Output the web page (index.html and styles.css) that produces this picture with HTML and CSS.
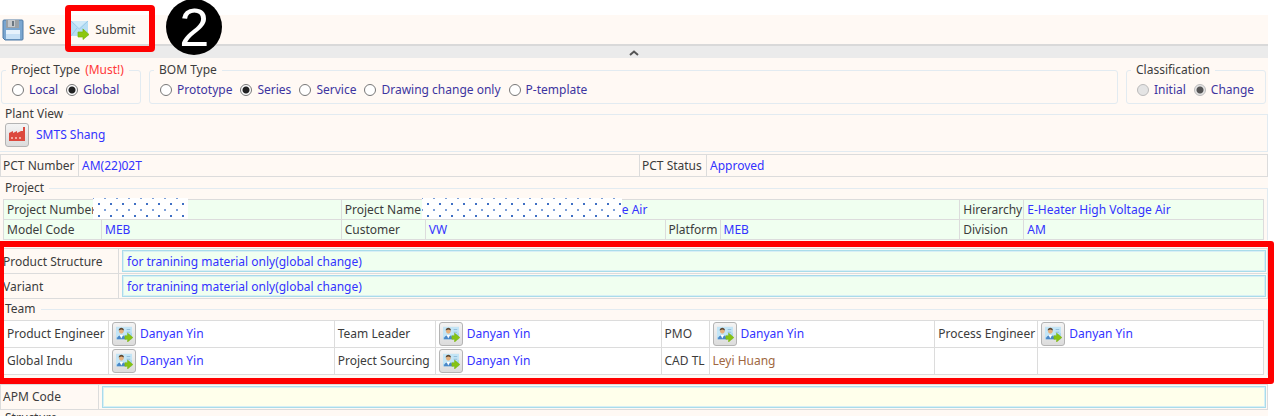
FILE: index.html
```html
<!DOCTYPE html>
<html lang="en">
<head>
<meta charset="utf-8">
<title>PCT Form</title>
<link rel="stylesheet" href="styles.css">
</head>
<body>
<svg class="defs" aria-hidden="true">
  <symbol id="person" viewBox="0 0 20 18">
    <rect x="1" y="1" width="18" height="14" fill="#a9d5ee"/>
    <path d="M1 1h18v7L1 13z" fill="#c3e5f6"/>
    <path d="M2 15c0-6 10-6 10 0z" fill="#4a88c8"/>
    <path d="M5 10l2 4 2-4z" fill="#fff"/>
    <circle cx="7" cy="6" r="2.6" fill="#e6b07c"/>
    <path d="M4 5c0-4 6-4 6 0l-3-1z" fill="#5d4630"/>
    <path d="M13 4h4M13 7h4" stroke="#8ab8d8"/>
    <path d="M11 11h3V8l6 5-6 5v-3h-3z" fill="#86c313" stroke="#79b512" stroke-width=".6"/>
  </symbol>
</svg>
<main class="app">
  <div class="toolbar">
    <button class="tool" type="button">
      <svg width="22" height="22" viewBox="0 0 22 22" aria-hidden="true">
        <path d="M1 2q0-1 1-1h18q1 0 1 1v18q0 1-1 1H3l-2-2z" fill="#7aa6d0" stroke="#4f7ba6"/>
        <path d="M4 1h13v8H4z" fill="#9ba1a6"/><path d="M6 1h7v7H6z" fill="#c6c9cc"/><path d="M10 2h2v5h-2z" fill="#6a7680"/>
        <path d="M4 11h14v9H4z" fill="#e6f2fc"/><path d="M4 15h14v5H4z" fill="#c7e0f5"/>
      </svg>
      <span>Save</span>
    </button>
    <button class="tool submit" type="button">
      <svg width="20" height="20" viewBox="0 0 20 20" aria-hidden="true">
        <path d="M1 1h17v15H1z" fill="#b7def5"/><path d="M1 1l8.500 8L18 1M1 16l6-8M18 16l-6-8" fill="none" stroke="#9ccae8"/>
        <path d="M2 1h15l-8 7z" fill="#d0eaf9"/>
        <path d="M8 12h5V9l6 5.500-6 5V17H8z" fill="#8cc70f" stroke="#7ab510" stroke-width=".7"/>
      </svg>
      <span>Submit</span>
    </button>
    <span class="step">2</span>
  </div>
  <button class="collapse" type="button" aria-label="Collapse toolbar">
    <svg width="10" height="6" viewBox="0 0 10 6" aria-hidden="true"><path d="M1 5l4-3.500L9 5" fill="none" stroke="#555" stroke-width="2"/></svg>
  </button>

  <div class="types">
    <fieldset class="group side">
      <legend>Project Type <span class="must">(Must!)</span></legend>
      <div class="radios">
        <label><input type="radio" name="ptype">Local</label>
        <label><input type="radio" name="ptype" checked>Global</label>
      </div>
    </fieldset>
    <fieldset class="group wide">
      <legend>BOM Type</legend>
      <div class="radios">
        <label><input type="radio" name="bom">Prototype</label>
        <label><input type="radio" name="bom" checked>Series</label>
        <label><input type="radio" name="bom">Service</label>
        <label><input type="radio" name="bom">Drawing change only</label>
        <label><input type="radio" name="bom">P-template</label>
      </div>
    </fieldset>
    <fieldset class="group side">
      <legend>Classification</legend>
      <div class="radios">
        <label><input type="radio" name="cls" disabled>Initial</label>
        <label><input type="radio" name="cls" checked disabled>Change</label>
      </div>
    </fieldset>
  </div>

  <fieldset class="section plant">
    <legend>Plant View</legend>
    <div class="pick">
      <button class="pick-btn" type="button" aria-label="Choose plant">
        <svg width="18" height="18" viewBox="0 0 18 18" aria-hidden="true">
          <path d="M1 15V7l4-2v2l4-2v2l4-2h2V1h2v14z" fill="#dc4a3f"/>
          <path d="M3 11h2v2H3zM7 11h2v2H7zM11 11h2v2h-2z" fill="#f3a9a0"/>
        </svg>
      </button>
      <span class="value">SMTS Shang</span>
    </div>
  </fieldset>

  <table class="grid pct">
    <colgroup><col class="w78"><col><col class="w67"><col></colgroup>
    <tr><th>PCT Number</th><td>AM(22)02T</td><th>PCT Status</th><td>Approved</td></tr>
  </table>

  <fieldset class="section project">
    <legend>Project</legend>
    <table class="grid green">
      <colgroup><col class="w98"><col><col class="w84"><col><col class="w55"><col><col class="w64"><col></colgroup>
      <tr><th>Project Number</th><td><span class="mask short"></span></td><th>Project Name</th><td colspan="3"><span class="mask long"></span><span class="tail">e Air</span></td><th>Hirerarchy</th><td>E-Heater High Voltage Air</td></tr>
      <tr><th>Model Code</th><td>MEB</td><th>Customer</th><td>VW</td><th>Platform</th><td>MEB</td><th>Division</th><td>AM</td></tr>
    </table>
  </fieldset>

  <div class="marked">
    <table class="grid entry">
      <colgroup><col class="w118"><col></colgroup>
      <tr><th><label for="structure">Product Structure</label></th><td><input class="field" id="structure" type="text" value="for tranining material only(global change)"></td></tr>
      <tr><th><label for="variant">Variant</label></th><td><input class="field" id="variant" type="text" value="for tranining material only(global change)"></td></tr>
    </table>
    <fieldset class="section team">
      <legend>Team</legend>
      <table class="grid white">
        <colgroup><col class="w105"><col><col class="w101"><col><col class="w48"><col><col class="w103"><col></colgroup>
        <tr>
          <th>Product Engineer</th><td><div class="pick"><button class="pick-btn" type="button" aria-label="Choose product engineer"><svg width="18" height="16"><use href="#person"/></svg></button>Danyan Yin</div></td>
          <th>Team Leader</th><td><div class="pick"><button class="pick-btn" type="button" aria-label="Choose team leader"><svg width="18" height="16"><use href="#person"/></svg></button>Danyan Yin</div></td>
          <th>PMO</th><td><div class="pick"><button class="pick-btn" type="button" aria-label="Choose PMO"><svg width="18" height="16"><use href="#person"/></svg></button>Danyan Yin</div></td>
          <th>Process Engineer</th><td><div class="pick"><button class="pick-btn" type="button" aria-label="Choose process engineer"><svg width="18" height="16"><use href="#person"/></svg></button>Danyan Yin</div></td>
        </tr>
        <tr>
          <th>Global Indu</th><td><div class="pick"><button class="pick-btn" type="button" aria-label="Choose global industrialisation"><svg width="18" height="16"><use href="#person"/></svg></button>Danyan Yin</div></td>
          <th>Project Sourcing</th><td><div class="pick"><button class="pick-btn" type="button" aria-label="Choose project sourcing"><svg width="18" height="16"><use href="#person"/></svg></button>Danyan Yin</div></td>
          <th>CAD TL</th><td class="brown">Leyi Huang</td>
          <th></th><td></td>
        </tr>
      </table>
    </fieldset>
  </div>

  <table class="grid entry apm">
    <colgroup><col class="w98"><col></colgroup>
    <tr><th><label for="apm">APM Code</label></th><td><input class="field yellow" id="apm" type="text"></td></tr>
  </table>
  <fieldset class="section">
    <legend>Structure</legend>
  </fieldset>
</main>
</body>
</html>
```
FILE: styles.css
```css
* { box-sizing: border-box; }
html, body { height: 100%; }
body {
  margin: 0;
  padding: 15px 6px 0 0;
  overflow: hidden;
  background: #fff;
  color: #3c3c3c;
  font: 12px/16px "Noto Sans", "Open Sans", sans-serif;
}
button, input { font: inherit; color: inherit; }
.defs { position: absolute; width: 0; height: 0; }
.app { background: #fff9f4; min-height: 100%; }

.toolbar { display: flex; align-items: center; height: 29px; padding-left: 2px; }
.tool { display: flex; align-items: center; gap: 5px; padding: 0; border: 0; background: none; }
.submit {
  position: relative;
  margin-left: 10px;
  padding: 0 20px 0 5px;
  height: 32px;
}
.submit::after {
  content: "";
  position: absolute;
  inset: -9px 0 -6px 0;
  border: 6px solid #f00;
  border-radius: 4px;
}
.step {
  position: relative;
  display: flex;
  align-items: center;
  justify-content: center;
  width: 56px;
  height: 56px;
  margin: -6px 0 0 11px;
  border-radius: 50%;
  background: #000;
  color: #fff;
  font: 54px/56px "Liberation Sans", sans-serif;
}
.collapse {
  display: flex;
  align-items: center;
  justify-content: center;
  width: 100%;
  height: 14px;
  padding: 2px 0 0;
  border: 0;
  border-top: 2px solid #d9d9d9;
  background: #ebebeb;
}

fieldset { min-width: 0; margin: 0; padding: 0; border: 1px solid #e2ebf1; }
legend { padding: 0 5px; height: 16px; }
.must { color: #ff3838; margin-left: 2px; }
.types { display: flex; gap: 8px; padding: 4px 2px 0 1px; }
.group { border-radius: 3px; height: 42px; }
.group legend { margin-left: 4px; }
.side { flex: 0 0 140px; }
.wide { flex: 1; }
.radios { display: flex; gap: 8px; padding: 4px 0 0 10px; }
.radios label { display: flex; align-items: center; gap: 5px; color: #3d35a0; white-space: nowrap; }
.radios input {
  appearance: none;
  width: 12px;
  height: 12px;
  margin: 0;
  border: 1px solid #777;
  border-radius: 50%;
  background: #fff;
}
.radios input:checked { background: radial-gradient(circle, #222 0 3px, #fff 4px); }
.radios input:disabled { border-color: #bbb; background: #e4e4e4; }
.radios input:checked:disabled { background: radial-gradient(circle, #555 0 3px, #e4e4e4 4px); }

.section { border-width: 1px 1px 0 0; }
.section legend { padding: 0 5px; }
.plant { margin-top: 2px; padding: 1px 0 4px 5px; border-bottom-width: 1px; }
.plant legend { margin-left: -5px; }
.pick { display: flex; align-items: center; gap: 4px; }
.pick-btn {
  display: flex;
  align-items: center;
  justify-content: center;
  width: 24px;
  height: 24px;
  padding: 0;
  border: 1px solid #b4b4b4;
  border-radius: 3px;
  background: linear-gradient(#f4f4f4, #dcdcdc);
}
.plant .pick { gap: 7px; }
.value { color: #3333ff; }

.grid { width: 100%; table-layout: fixed; border-collapse: collapse; }
.grid th, .grid td { height: 20px; padding: 0 3px; border: 1px solid #dcdcdc; text-align: left; font-weight: 400; white-space: nowrap; }
.grid td { color: #3333ff; }
.grid td.brown { color: #a0673f; }
.pct { margin-top: 2px; }
.pct th, .pct td { height: 22px; }
.pct th { padding: 0 2px; }
.w48 { width: 48px; }
.w55 { width: 55px; }
.w64 { width: 64px; }
.w67 { width: 67px; }
.w78 { width: 78px; }
.w84 { width: 84px; }
.w98 { width: 98px; }
.w101 { width: 101px; }
.w103 { width: 103px; }
.w105 { width: 105px; }
.w118 { width: 118px; }

.project { margin-top: 3px; padding: 3px 3px 0; }
.project legend, .team legend { margin-left: -3px; }
.green { background: #f0fff0; }
.green td { position: relative; }
.mask {
  position: absolute;
  top: -2px;
  height: 21px;
  background:
    radial-gradient(circle, #3f6fc4 0 1px, transparent 1px) 0 0 / 12px 12px,
    radial-gradient(circle, #7d9fd8 0 1px, transparent 1px) 6px 6px / 12px 12px,
    #fff;
}
.short { left: -9px; width: 95px; }
.long { left: -4px; width: 200px; }
.tail { margin-left: 193px; }

.marked { position: relative; margin-top: 8px; padding-bottom: 9px; }
.marked::after {
  content: "";
  position: absolute;
  inset: -7px -6px 0 -2px;
  border: 6px solid #f00;
  border-radius: 3px;
  pointer-events: none;
}
.entry th { height: 25px; padding: 2px 2px 0; }
.entry td { padding: 1px 1px 1px 3px; }
.field {
  display: block;
  width: 100%;
  height: 22px;
  padding: 1px 4px 0;
  border: 1px solid #a9dcea;
  outline: 1px solid #d8eff5;
  outline-offset: -2px;
  background: #f0fff0;
  color: #3333ff;
}
.yellow { background: #ffffeb; }
.apm th { padding-top: 0; }
.team { margin-top: 2px; padding: 3px 3px 0; }
.white { background: #fff; }
.white th, .white td { height: 27px; }
```
